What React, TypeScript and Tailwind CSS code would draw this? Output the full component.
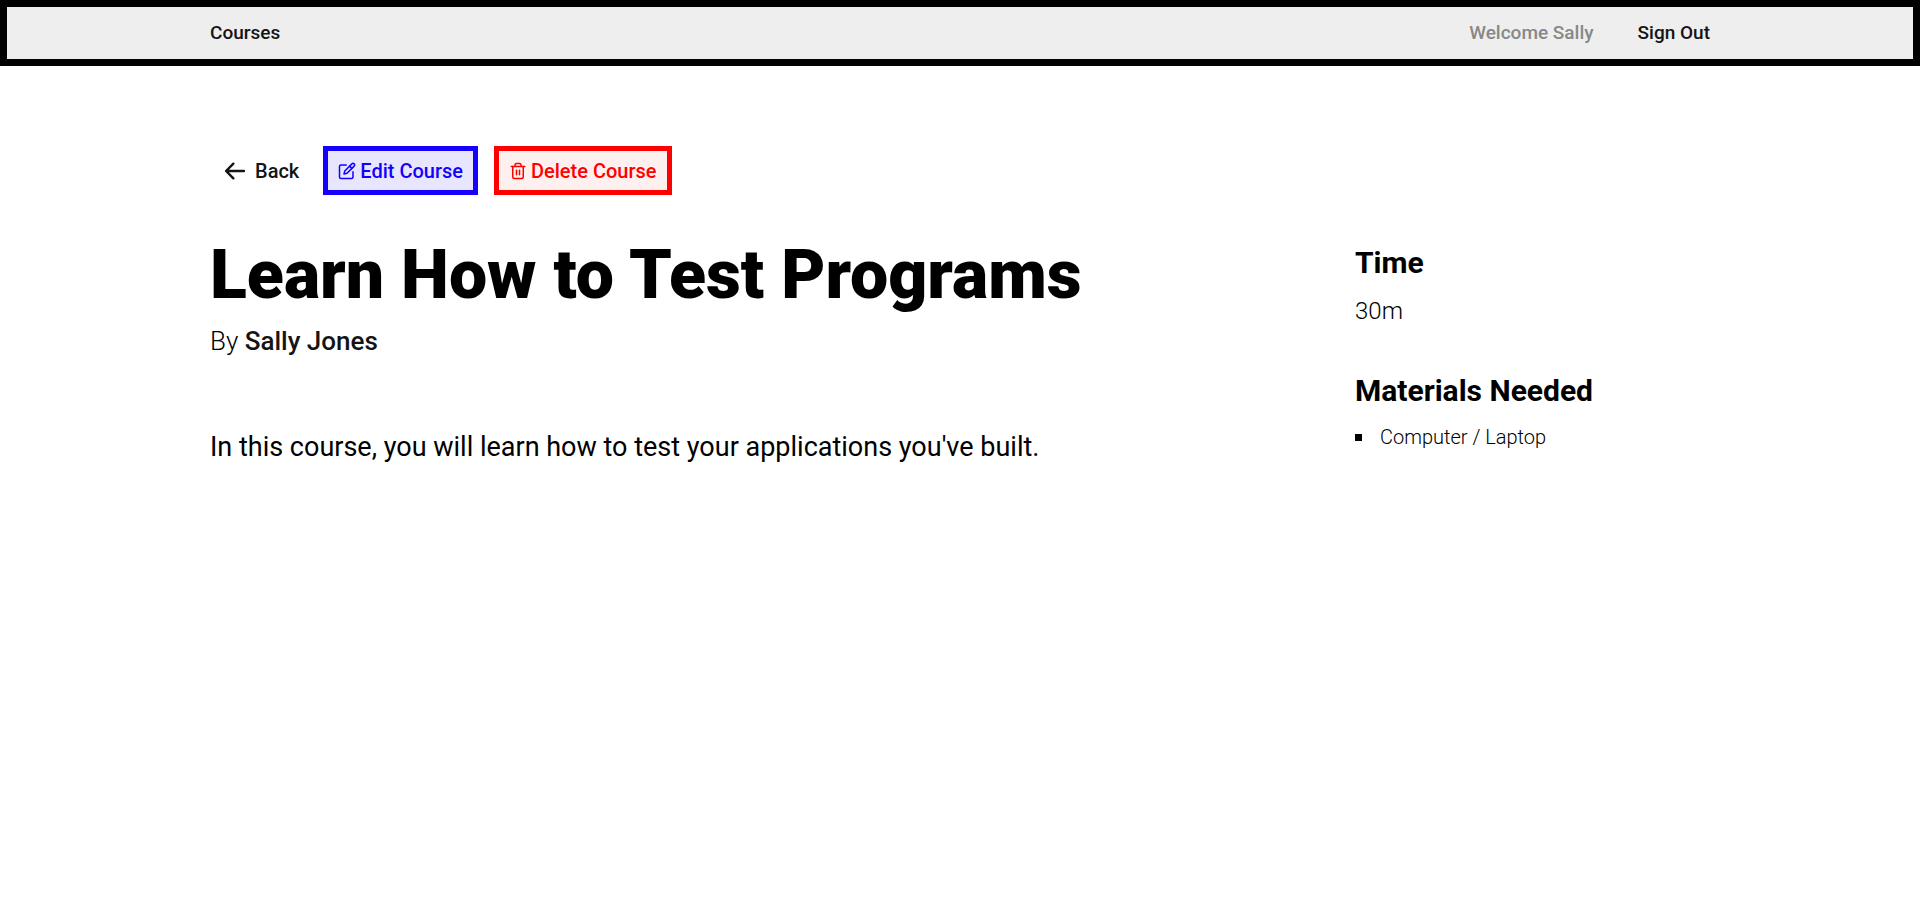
import { FiTrash2 } from "react-icons/fi";
import { PiArrowLeftBold } from "react-icons/pi";

const materials = ["Computer / Laptop"];

function EditIcon() {
  return (
    <svg
      className="size-[18px]"
      viewBox="0 0 24 24"
      fill="none"
      stroke="currentColor"
      strokeWidth="2"
      strokeLinecap="round"
      strokeLinejoin="round"
      aria-hidden="true"
    >
      <path d="M11 4H4a2 2 0 0 0-2 2v14a2 2 0 0 0 2 2h14a2 2 0 0 0 2-2v-7" />
      <path d="M18.5 2.5a2.12 2.12 0 0 1 3 3L12 15l-4 1 1-4z" />
      <path d="M15.5 5.5l3 3" />
    </svg>
  );
}

function Header() {
  return (
    <header className="border-[7px] border-black bg-[#eeeeee]">
      <div className="mx-auto flex h-[52px] max-w-[1500px] items-center justify-between text-[19px] font-medium text-[#141414]">
        <a href="#courses">Courses</a>
        <nav className="flex items-center gap-11">
          <span className="text-[#888888]">Welcome Sally</span>
          <a href="#signout">Sign Out</a>
        </nav>
      </div>
    </header>
  );
}

function Actions() {
  return (
    <div className="flex items-center gap-4 text-xl font-medium">
      <a href="#back" className="flex items-center gap-[7px] pr-2 pl-3 text-[#141414]">
        <PiArrowLeftBold className="size-[26px]" />
        Back
      </a>
      <a
        href="#edit"
        className="flex h-[49px] items-center gap-1 border-5 border-[#1500ff] bg-[#e8e6ff] px-[10px] text-[#1500ff]"
      >
        <EditIcon />
        Edit Course
      </a>
      <button
        type="button"
        className="flex h-[49px] cursor-pointer items-center gap-1 border-5 border-[#ff0000] bg-[#fff0f0] px-[10px] text-[#ff0000]"
      >
        <FiTrash2 className="size-[18px]" />
        Delete Course
      </button>
    </div>
  );
}

export default function App() {
  return (
    <div className="font-['Roboto',sans-serif] text-black">
      <Header />
      <main className="mx-auto max-w-[1500px] pt-20">
        <Actions />
        <div className="mt-10 flex justify-between">
          <section>
            <h1 className="text-[68px] leading-20 font-black">Learn How to Test Programs</h1>
            <p className="mt-2 text-[26px] leading-9 font-light">
              By{" "}
              <a href="#author" className="font-medium text-[#141414]">
                Sally Jones
              </a>
            </p>
            <p className="mt-17 text-[27px] leading-10 font-normal">
              In this course, you will learn how to test your applications you've built.
            </p>
          </section>
          <aside className="w-[355px] pt-2">
            <h2 className="text-[30px] leading-10 font-bold">Time</h2>
            <p className="mt-2 text-2xl leading-10 font-light">30m</p>
            <h2 className="mt-10 text-[30px] leading-10 font-bold">Materials Needed</h2>
            <ul className="mt-3">
              {materials.map((item) => (
                <li key={item} className="flex items-center gap-[18px] text-xl leading-7 font-light">
                  <span className="size-[7px] bg-black" />
                  {item}
                </li>
              ))}
            </ul>
          </aside>
        </div>
      </main>
    </div>
  );
}
